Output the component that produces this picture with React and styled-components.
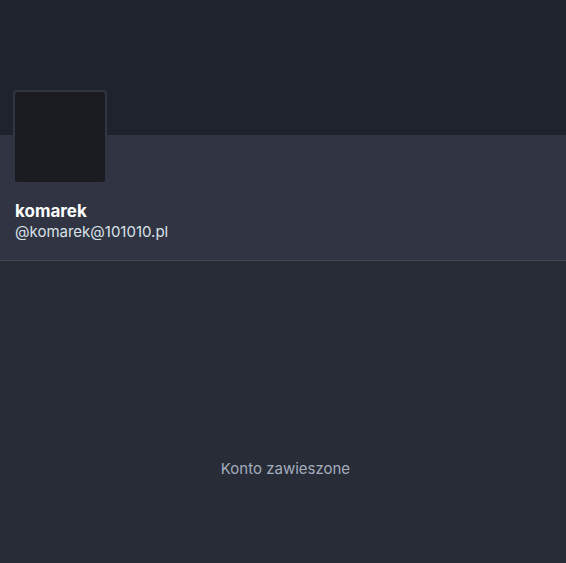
import React from 'react';
import styled, { createGlobalStyle } from 'styled-components';

const GlobalStyle = createGlobalStyle`
  html, body {
    margin: 0;
    padding: 0;
    background: #282c37;
  }
  body {
    font-family: Inter, "Noto Sans", sans-serif;
  }
`;

const Page = styled.div`
  width: 566px;
  height: 563px;
  display: flex;
  flex-direction: column;
  background: #282c37;
  overflow: hidden;
`;

const HeaderImage = styled.div`
  height: 135px;
  background: #1f232b;
  flex-shrink: 0;
`;

const Bar = styled.div`
  background: #313543;
  border-bottom: 1px solid #42485a;
  padding: 0 13px 17px;
  display: flex;
  flex-direction: column;
`;

const Avatar = styled.div`
  width: 90px;
  height: 90px;
  margin-top: -45px;
  border: 2px solid #313543;
  border-radius: 4px;
  background: #1b1c21;
`;

const Names = styled.div`
  padding: 17px 2px 0;
  display: flex;
  flex-direction: column;
`;

const DisplayName = styled.strong`
  font-size: 17px;
  line-height: 20px;
  font-weight: 700;
  color: #ffffff;
`;

const Handle = styled.span`
  font-size: 15px;
  line-height: 22px;
  color: #d9e1e8;
`;

const Empty = styled.div`
  flex: 1;
  display: flex;
  justify-content: center;
  padding: 198px 0 0 5px;
  font-size: 15px;
  line-height: 20px;
  color: #a3acbd;
`;

export default function App() {
  return (
    <Page>
      <GlobalStyle />
      <HeaderImage />
      <Bar>
        <Avatar />
        <Names>
          <DisplayName>komarek</DisplayName>
          <Handle>@komarek@101010.pl</Handle>
        </Names>
      </Bar>
      <Empty>Konto zawieszone</Empty>
    </Page>
  );
}
